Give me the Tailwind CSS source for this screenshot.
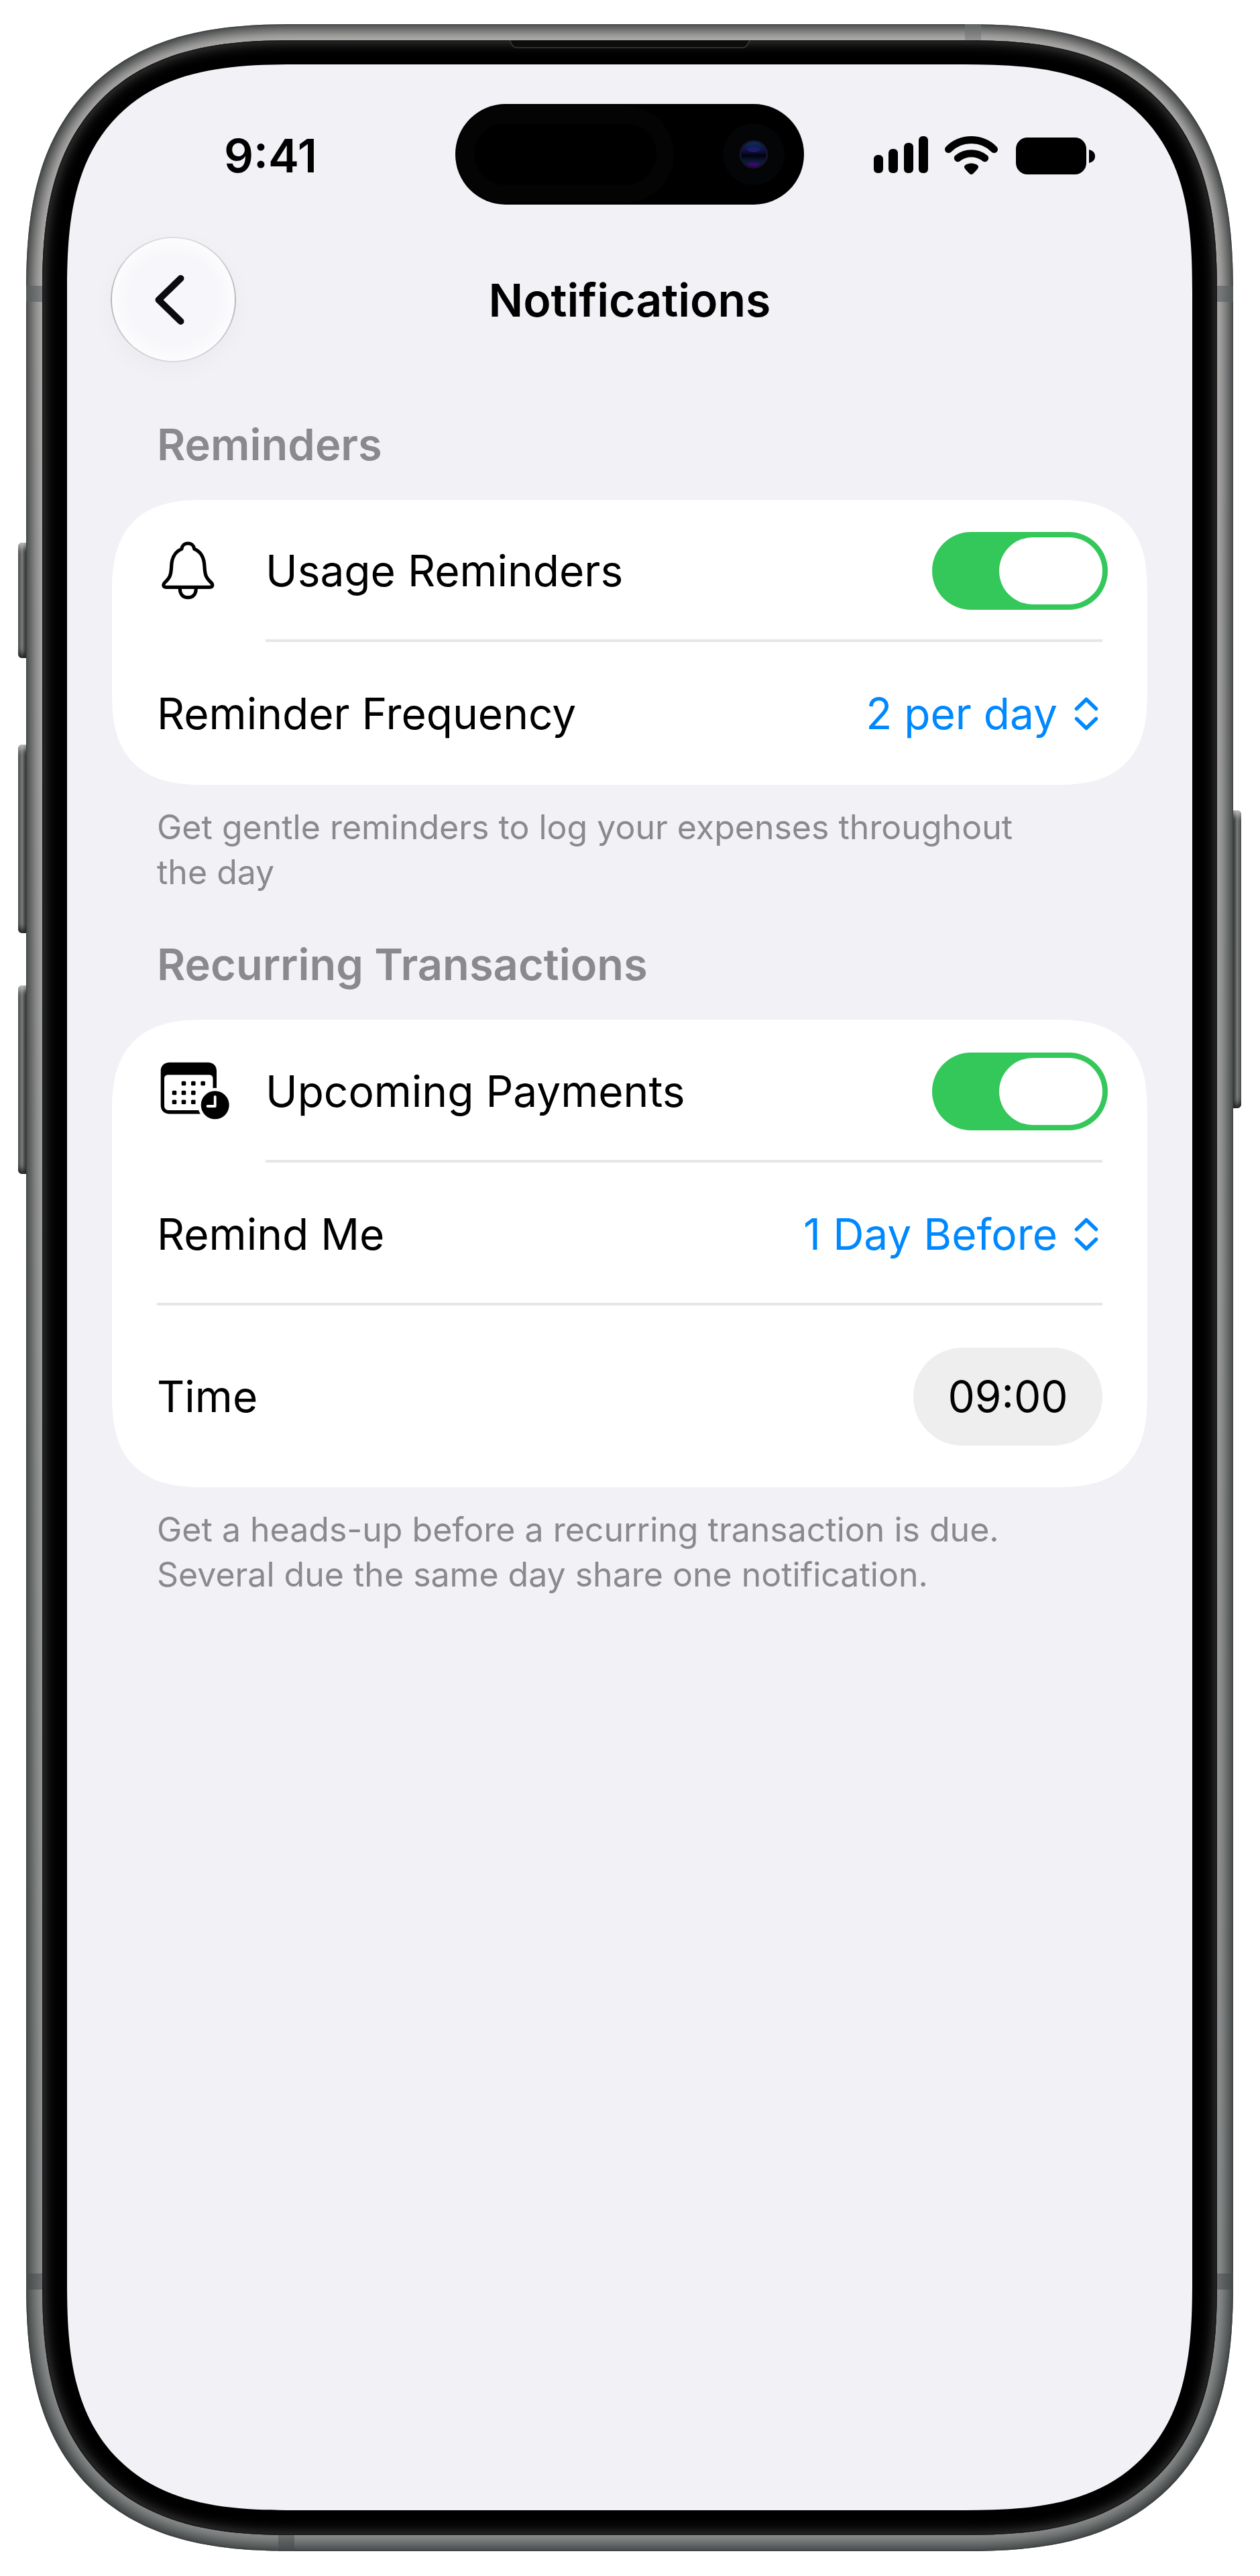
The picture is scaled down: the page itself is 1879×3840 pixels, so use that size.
<!DOCTYPE html>
<html lang="en">
<head>
  <meta charset="UTF-8">
  <meta name="viewport" content="width=device-width, initial-scale=1.0">
  <title>Notifications</title>
  <script src="https://cdn.jsdelivr.net/npm/@tailwindcss/browser@4"></script>
</head>
<body class="flex min-h-screen bg-white pt-9 pb-[37px] pl-[39px] pr-10 font-[Inter,'Liberation_Sans',sans-serif] text-black">

<!-- Phone frame -->
<div class="relative flex flex-1 rounded-[325px] supports-[corner-shape:squircle]:rounded-[401px] [corner-shape:superellipse(1.36)] bg-linear-to-b from-[#b4b2b0] via-[#a2a2a2] to-[#8c8e8e] p-6 shadow-[inset_0_0_3px_#2c2f2f,inset_0_0_20px_9px_#383c3c]">

  <!-- Side buttons -->
  <div class="absolute -left-3 top-[773px] h-[172px] w-3 rounded-l-md bg-linear-to-r from-[#4a4c4c] via-[#7c7c7c] to-[#2c2e2f] shadow-[inset_0_-12px_10px_-6px_#222,inset_0_12px_10px_-6px_#bbb]"></div>
  <div class="absolute -left-3 top-[1074px] h-[281px] w-3 rounded-l-md bg-linear-to-r from-[#4a4c4c] via-[#7c7c7c] to-[#2c2e2f] shadow-[inset_0_-12px_10px_-6px_#222,inset_0_12px_10px_-6px_#bbb]"></div>
  <div class="absolute -left-3 top-[1433px] h-[281px] w-3 rounded-l-md bg-linear-to-r from-[#4a4c4c] via-[#7c7c7c] to-[#2c2e2f] shadow-[inset_0_-12px_10px_-6px_#222,inset_0_12px_10px_-6px_#bbb]"></div>
  <div class="absolute -right-3 top-[1172px] h-[444px] w-3 rounded-r-md bg-linear-to-l from-[#4a4c4c] via-[#7c7c7c] to-[#2c2e2f] shadow-[inset_0_-12px_10px_-6px_#222,inset_0_12px_10px_-6px_#bbb]"></div>

  <!-- Antenna bands -->
  <div class="absolute left-0 top-[390px] h-6 w-6 bg-linear-to-r from-[#54595a] to-[#7d7f80]"></div>
  <div class="absolute right-0 top-[390px] h-6 w-6 bg-linear-to-l from-[#54595a] to-[#7d7f80]"></div>
  <div class="absolute left-0 bottom-[390px] h-6 w-6 bg-linear-to-r from-[#45494a] to-[#6b6d6e]"></div>
  <div class="absolute right-0 bottom-[390px] h-6 w-6 bg-linear-to-l from-[#45494a] to-[#6b6d6e]"></div>
  <div class="absolute top-0 right-[376px] h-6 w-6 bg-linear-to-b from-[#606465] to-[#929292]"></div>
  <div class="absolute bottom-0 left-[376px] h-6 w-6 bg-linear-to-t from-[#45494a] to-[#6b6d6e]"></div>

  <!-- Black bezel -->
  <div class="relative flex flex-1 rounded-[305px] supports-[corner-shape:squircle]:rounded-[377px] [corner-shape:superellipse(1.38)] bg-black p-[37px] pt-9 shadow-[inset_0_0_2px_1px_#111,inset_0_0_20px_2px_#4a4a4a]">
    <svg class="absolute top-0 left-1/2 w-[360px] h-3 -translate-x-1/2" viewBox="0 0 360 12" fill="#0d0d0d" stroke="#3a3a3a" stroke-width="1.5">
      <path d="M0 -2C4 4 4 11 12 11H348C356 11 356 4 360 -2"/>
    </svg>

    <div class="flex-1 rounded-[258px] supports-[corner-shape:squircle]:rounded-[340px] [corner-shape:superellipse(1.45)] bg-[#f1f1f6] pt-[59px]">

      <!-- Status bar -->
      <header class="grid h-[150px] grid-cols-[1fr_520px_1fr] items-center">
        <div class="pt-1 pl-7 text-center text-[69px] leading-[80px] font-semibold">9:41</div>
        <div class="flex h-full items-center justify-between rounded-full bg-black pl-7 pr-[53px]">
          <div class="h-[92px] w-[272px] rounded-full bg-black shadow-[0_0_0_26px_#040404]"></div>
          <svg class="size-[44px] rounded-full shadow-[0_0_0_24px_#030507]" viewBox="0 0 44 44">
            <defs>
              <linearGradient id="lens" x1="0" y1="0" x2="0" y2="1">
                <stop offset="0" stop-color="#0a3550"/>
                <stop offset=".35" stop-color="#11114a"/>
                <stop offset=".55" stop-color="#02020c"/>
                <stop offset=".78" stop-color="#0a1d3a"/>
                <stop offset="1" stop-color="#2c0654"/>
              </linearGradient>
            </defs>
            <circle cx="22" cy="22" r="20" fill="url(#lens)" stroke="#14142a" stroke-width="3"/>
            <ellipse cx="22" cy="15" rx="10" ry="4" fill="#1c1c68"/>
            <ellipse cx="22" cy="37" rx="9" ry="3" fill="#3d0570"/>
          </svg>
        </div>
        <div class="flex items-center justify-center pt-1 pr-[42px]">
          <svg class="h-[58px] w-[332px]" viewBox="0 0 332 58">
            <rect x="1" y="28" width="14" height="27" rx="6"/>
            <rect x="23" y="19" width="14" height="36" rx="6"/>
            <rect x="46" y="10" width="14" height="45" rx="6"/>
            <rect x="68" y="0" width="14" height="55" rx="6"/>
            <g fill="none" stroke="#000" stroke-linecap="round" stroke-width="11">
              <path d="M112.500 19.600A48.300 48.300 0 0 1 180.500 19.600"/>
              <path d="M126.300 32.700A32.600 32.600 0 0 1 166.700 32.700"/>
            </g>
            <path d="M146.500 40.500C152 40.500 157 43 157 45.500C157 48 155 50 149.500 55.500Q146.500 58.500 143.500 55.500C138 50 136 48 136 45.500C136 43 141 40.500 146.500 40.500Z"/>
            <rect x="213" y="2" width="105" height="55" rx="17"/>
            <path d="M322 20C328 21.500 331 25 331 30C331 35 328 38.500 322 40Z"/>
          </svg>
        </div>
      </header>

      <!-- Title bar -->
      <nav class="mt-12 grid grid-cols-[1fr_auto_1fr] items-center px-[65px]">
        <button type="button" aria-label="Back" class="flex size-[187px] rounded-full bg-linear-to-b from-[#dedee2] via-[#b4b4b9] to-[#d9d9dd] p-[2px] shadow-[0_10px_36px_rgba(0,0,0,0.03)]">
          <span class="flex flex-1 items-center justify-center self-stretch rounded-full bg-[#f7f7fb] pr-3 shadow-[inset_0_0_30px_4px_#ffffff]">
            <svg class="h-[76px] w-[46px]" viewBox="0 0 46 76" fill="none" stroke="#0b0b0d" stroke-width="10" stroke-linecap="round" stroke-linejoin="round">
              <path d="M39.500 6L6.500 38L39.500 70"/>
            </svg>
          </span>
        </button>
        <h1 class="text-[68px] leading-[80px] font-semibold">Notifications</h1>
      </nav>

      <main class="mx-[67px]">
        <section class="mt-[83px]">
          <h2 class="mb-[42px] pl-[67px] text-[65px] leading-[80px] font-semibold text-[#8a8a8e]">Reminders</h2>
          <div class="rounded-[108px] supports-[corner-shape:squircle]:rounded-[140px] [corner-shape:superellipse(1.4)] bg-white px-[67px]">
            <div class="flex h-[212px] items-center">
              <div class="w-[162px] shrink-0 pl-[7px]">
                <svg class="h-[88px] w-[80px]" viewBox="0 0 80 88" fill="none" stroke="#000" stroke-width="5.200" stroke-linejoin="round">
                  <path d="M39.300 3C44.600 3 48.300 6.600 48.700 11.400C58 15 63.500 23 64 38C64.600 50 66 54 74 61.500C76.600 64 76.600 68.300 72 68.300H6.600C2 68.300 2 64 4.600 61.500C12.600 54 14 50 14.600 38C15 23 20.600 15 29.900 11.400C30.300 6.600 34 3 39.300 3Z"/>
                  <path d="M27.300 70C27.300 79 32 83.700 39.300 83.700C46.600 83.700 51.300 79 51.300 70"/>
                </svg>
              </div>
              <div class="flex h-full flex-1 items-center justify-between border-b-4 border-[#e6e6e6] pt-1">
                <label for="usage" class="text-[64px] leading-[80px]">Usage Reminders</label>
                <input id="usage" type="checkbox" role="switch" checked class="-mr-2 h-[116px] w-[262px] appearance-none rounded-full bg-gray-300 p-2 before:block before:h-[100px] before:w-[154px] before:rounded-full before:bg-white checked:bg-[#34c759] checked:before:ml-auto">
              </div>
            </div>
            <div class="flex h-[213px] items-center justify-between">
              <label for="frequency" class="text-[64px] leading-[80px]">Reminder Frequency</label>
              <div class="flex items-center gap-[25px] pr-[6px] text-[#0088ff]">
                <select id="frequency" class="field-sizing-content appearance-none text-[64px] leading-[80px]">
                  <option>1 per day</option>
                  <option selected>2 per day</option>
                  <option>3 per day</option>
                </select>
                <svg class="h-[50px] w-9" viewBox="0 0 36 50" fill="none" stroke="currentColor" stroke-width="5.500" stroke-linecap="round" stroke-linejoin="round">
                  <path d="M3.500 17.500L18 3.500L32.500 17.500M3.500 32.500L18 46.500L32.500 32.500"/>
                </svg>
              </div>
            </div>
          </div>
          <p class="mt-[30px] px-[67px] text-[50px] leading-[67px] text-[#8a8a8e]">Get gentle reminders to log your expenses throughout<br>the day</p>
        </section>

        <section class="mt-16">
          <h2 class="mb-[42px] pl-[67px] text-[65px] leading-[80px] font-semibold text-[#8a8a8e]">Recurring Transactions</h2>
          <div class="rounded-[108px] supports-[corner-shape:squircle]:rounded-[140px] [corner-shape:superellipse(1.4)] bg-white px-[67px]">
            <div class="flex h-[213px] items-center">
              <div class="w-[162px] shrink-0 pl-[5px]">
                <svg class="h-[88px] w-[104px]" viewBox="0 0 104 88">
                  <path fill-rule="evenodd" d="M14 .7H71C79 .7 84 5.500 84 13.500V64.500C84 72.500 79 77.500 71 77.500H14C6 77.500 .7 72.500 .7 64.500V13.500C.7 5.500 6 .7 14 .7ZM12 19.300C8 19.300 6 21.300 6 25.300V65C6 69.500 8.500 72 13 72H71.500C76 72 78.500 69.500 78.500 65V25.300C78.500 21.300 76.500 19.300 72.500 19.300Z"/>
                  <rect x="31.700" y="28.700" width="6.600" height="6.600" rx="1.500"/>
                  <rect x="46" y="28.700" width="6.600" height="6.600" rx="1.500"/>
                  <rect x="60.400" y="28.700" width="6.600" height="6.600" rx="1.500"/>
                  <rect x="17.700" y="42.700" width="6.600" height="6.600" rx="1.500"/>
                  <rect x="31.700" y="42.700" width="6.600" height="6.600" rx="1.500"/>
                  <rect x="46" y="42.700" width="6.600" height="6.600" rx="1.500"/>
                  <rect x="17.700" y="56.500" width="6.600" height="6.600" rx="1.500"/>
                  <rect x="31.700" y="56.500" width="6.600" height="6.600" rx="1.500"/>
                  <rect x="46" y="56.500" width="6.600" height="6.600" rx="1.500"/>
                  <circle cx="81.700" cy="64.300" r="23.300" stroke="#fff" stroke-width="4.600"/>
                  <path d="M81.700 52V66H70.500" fill="none" stroke="#fff" stroke-width="3.800" stroke-linecap="round" stroke-linejoin="round"/>
                </svg>
              </div>
              <div class="flex h-full flex-1 items-center justify-between border-b-4 border-[#e6e6e6] pt-1">
                <label for="upcoming" class="text-[64px] leading-[80px]">Upcoming Payments</label>
                <input id="upcoming" type="checkbox" role="switch" checked class="-mr-2 h-[116px] w-[262px] appearance-none rounded-full bg-gray-300 p-2 before:block before:h-[100px] before:w-[154px] before:rounded-full before:bg-white checked:bg-[#34c759] checked:before:ml-auto">
              </div>
            </div>
            <div class="flex h-[213px] items-center justify-between border-b-4 border-[#e6e6e6] pt-1">
              <label for="remind" class="text-[64px] leading-[80px]">Remind Me</label>
              <div class="flex items-center gap-[25px] pr-[6px] text-[#0088ff]">
                <select id="remind" class="field-sizing-content appearance-none text-[64px] leading-[80px]">
                  <option>Same Day</option>
                  <option selected>1 Day Before</option>
                  <option>2 Days Before</option>
                </select>
                <svg class="h-[50px] w-9" viewBox="0 0 36 50" fill="none" stroke="currentColor" stroke-width="5.500" stroke-linecap="round" stroke-linejoin="round">
                  <path d="M3.500 17.500L18 3.500L32.500 17.500M3.500 32.500L18 46.500L32.500 32.500"/>
                </svg>
              </div>
            </div>
            <div class="flex h-[271px] items-center justify-between">
              <label for="time" class="text-[64px] leading-[80px]">Time</label>
              <input id="time" type="text" value="09:00" class="h-[146px] w-[282px] rounded-full bg-[#eeeeee] text-center text-[64px] leading-[80px]">
            </div>
          </div>
          <p class="mt-[30px] px-[67px] text-[50px] leading-[67px] text-[#8a8a8e]">Get a heads-up before a recurring transaction is due.<br>Several due the same day share one notification.</p>
        </section>
      </main>
    </div>
  </div>
</div>
</body>
</html>
